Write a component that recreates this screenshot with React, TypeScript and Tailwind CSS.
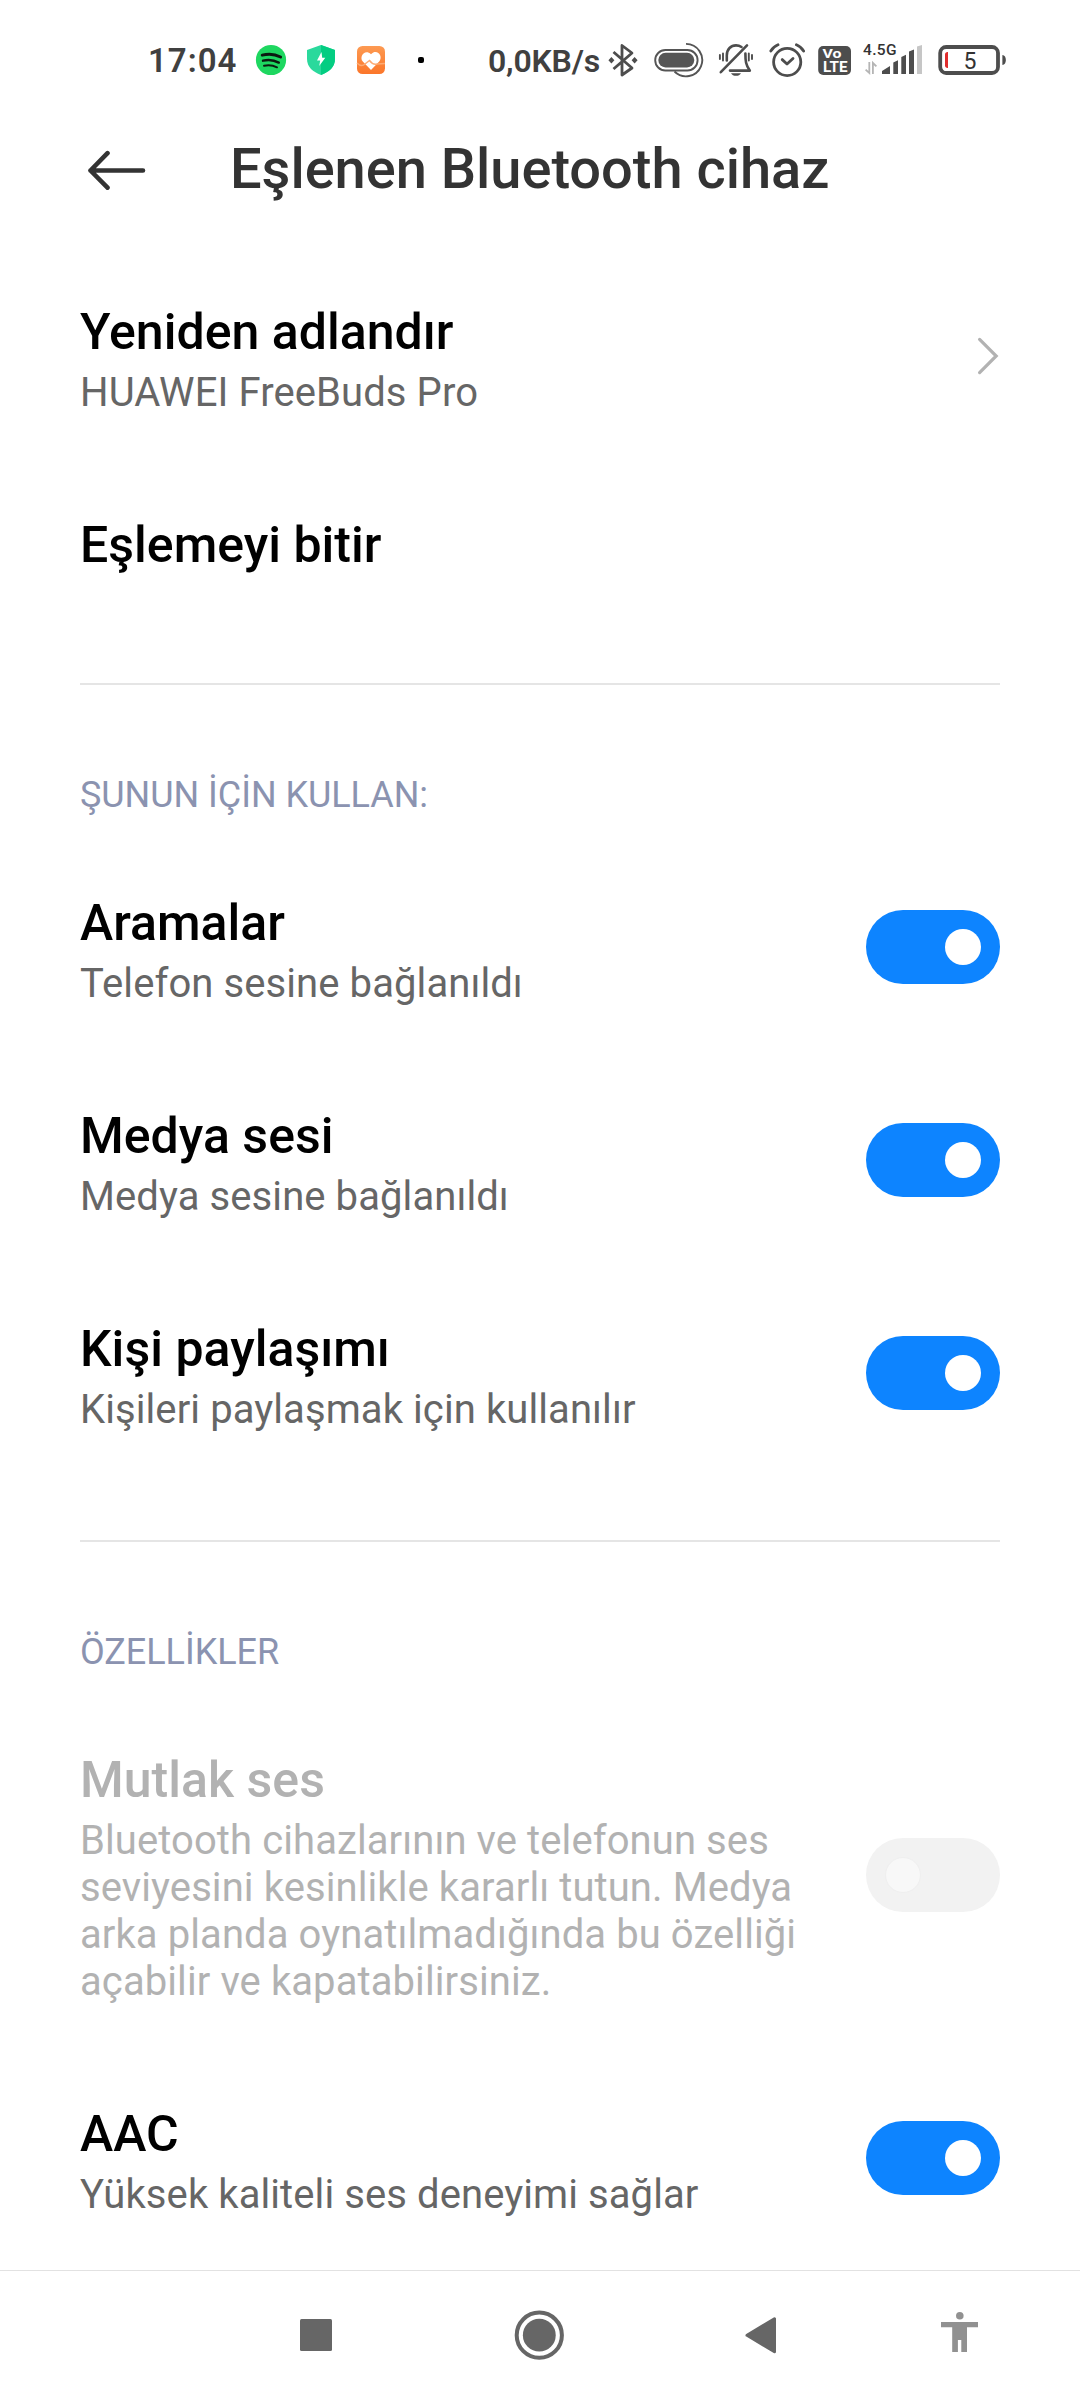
import { clsx } from "clsx";

const PROFILES = [
  { title: "Aramalar", text: "Telefon sesine bağlanıldı", on: true },
  { title: "Medya sesi", text: "Medya sesine bağlanıldı", on: true },
  { title: "Kişi paylaşımı", text: "Kişileri paylaşmak için kullanılır", on: true },
];

const FEATURES = [
  {
    title: "Mutlak ses",
    text: "Bluetooth cihazlarının ve telefonun ses seviyesini kesinlikle kararlı tutun. Medya arka planda oynatılmadığında bu özelliği açabilir ve kapatabilirsiniz.",
    on: false,
    disabled: true,
  },
  { title: "AAC", text: "Yüksek kaliteli ses deneyimi sağlar", on: true },
];

function StatusBar() {
  return (
    <div className="flex h-[120px] shrink-0 items-center pl-[148px] text-[#404040]">
      <span className="w-[107px] shrink-0 pt-0.5 whitespace-nowrap text-[33px] leading-10 font-semibold tracking-[1px]">17:04</span>

      {/* Spotify */}
      <svg className="shrink-0" width="32" height="40" viewBox="0 0 32 40" fill="none" stroke="#0b1a10" strokeLinecap="round">
        <circle cx="16" cy="20" r="15.1" fill="#1ed760" stroke="none" />
        <path d="M7.2 15.2C13 13.6 20 14.1 25.6 17" strokeWidth="2.9" />
        <path d="M8 20.7C13 19.4 19 20 23.8 22.6" strokeWidth="2.4" />
        <path d="M9 25.8C13.5 24.8 18 25.3 22 27.3" strokeWidth="2" />
      </svg>

      {/* Güvenlik */}
      <svg className="ml-[19px] shrink-0" width="30" height="40" viewBox="0 0 30 40">
        <path d="M15 5L29 10V19C29 27 23 32 15 35C7 32 1 27 1 19V10Z" fill="#2ad99c" />
        <path d="M15 5L29 10V19C29 27 23 32 15 35Z" fill="#04cd82" />
        <path d="M15.5 12L11 20.5H14.2L13.2 26L19.3 17.8H16.2Z" fill="#fff" />
      </svg>

      {/* Sağlık */}
      <svg className="ml-5 shrink-0" width="30" height="40" viewBox="0 0 30 40">
        <defs>
          <linearGradient id="health" x1="0" y1="0" x2="0" y2="1">
            <stop offset="0" stopColor="#fd9a52" />
            <stop offset="1" stopColor="#fb762a" />
          </linearGradient>
        </defs>
        <rect x="1" y="6" width="28" height="28" rx="5.5" fill="url(#health)" />
        <path d="M15 30L6.8 21.6C2.8 16.8 8.8 8.2 15 14.2C21.2 8.2 27.6 16.4 23.2 21.6Z" fill="#fff" />
        <path d="M1 23C4 26 7 25.8 9 24L13.5 20.5C16 24 18 25 21 24L29 23.5" fill="none" stroke="#fdab74" strokeWidth="1.5" />
      </svg>

      <svg className="ml-[31px] shrink-0" width="8" height="40" viewBox="0 0 8 40">
        <rect x="1" y="17" width="6" height="6" rx="2" fill="#000" />
      </svg>

      <span className="ml-[63px] w-[120px] shrink-0 pt-0.5 whitespace-nowrap text-[32px] leading-10 font-semibold tracking-[-0.2px]">0,0KB/s</span>

      {/* Bluetooth */}
      <svg className="shrink-0" width="30" height="40" viewBox="0 0 30 40" fill="none" stroke="#4d4d4d" strokeWidth="2.8">
        <path d="M5.5 12L24 28L14 35V5.5L24 13L5.5 29" strokeLinejoin="round" />
        <path d="M3.4 17L6.4 20.3L3.4 23.6L.4 20.3ZM26.6 17L29.6 20.3L26.6 23.6L23.6 20.3Z" fill="#4d4d4d" stroke="none" />
      </svg>

      {/* Kulaklık pili */}
      <svg className="ml-4 shrink-0" width="50" height="40" viewBox="0 0 50 40" fill="none" stroke="#555" strokeWidth="1.9">
        <path d="M32 3.9A16.2 16.2 0 1 1 20.5 31.5" />
        <rect x="1.2" y="10" width="42.4" height="20.5" rx="10.2" fill="#fff" />
        <rect x="4.3" y="12.8" width="36" height="14.6" rx="7.3" fill="#555" stroke="none" />
      </svg>

      {/* Sessiz */}
      <svg className="ml-3.5 shrink-0" width="36" height="40" viewBox="0 0 36 40" fill="none" stroke="#4d4d4d" strokeWidth="2.6" strokeLinecap="round">
        <path d="M8.8 20.5V15.5C8.8 9 13 5.4 18 5.4C20.3 5.4 22 6 23.5 7" />
        <path d="M27.4 13.5C27.4 21 27.8 25 31.8 30.6H12" strokeLinejoin="round" />
        <path d="M2.8 32.2L29 5.4" />
        <path d="M1.9 15V19M5 13.4V20.6M30.8 13.4V20.6M34 15V19" strokeWidth="1.9" />
        <path d="M13 33.2H23C21.5 36.6 14.5 36.6 13 33.2Z" fill="#4d4d4d" stroke="none" />
      </svg>

      {/* Alarm */}
      <svg className="ml-3.5 shrink-0" width="37" height="40" viewBox="0 0 37 40" fill="none" stroke="#4d4d4d" strokeWidth="2.8" strokeLinecap="round">
        <circle cx="19.2" cy="22" r="13.6" />
        <path d="M2.8 11C4.5 8.2 7 6 10 4.8M28.4 4.8C31.4 6 33.9 8.2 35.6 11" />
        <path d="M14.2 19.6L19 24L25 18.4" strokeLinejoin="round" />
      </svg>

      {/* VoLTE */}
      <svg className="ml-3 shrink-0 font-bold" width="35" height="40" viewBox="0 0 35 40" fill="#fff">
        <rect x="1.2" y="6" width="32.8" height="29" rx="5" fill="#4d4d4d" />
        <text x="5.6" y="17.8" fontSize="12.5" textLength="19" lengthAdjust="spacingAndGlyphs">Vo</text>
        <text x="6" y="31.8" fontSize="15" textLength="24.5" lengthAdjust="spacingAndGlyphs">LTE</text>
      </svg>

      {/* Sinyal */}
      <svg className="ml-[11px] shrink-0" width="60" height="40" viewBox="0 0 60 40" fill="#4d4d4d">
        <text x="0" y="14.8" fontSize="15.5" fontWeight="500" fill="#333" textLength="33.5">4.5G</text>
        <path d="M6.3 22V33L2.6 29.6M9.9 34V23L13.4 26.4" fill="none" stroke="#b5b5b5" strokeWidth="1.8" />
        <path d="M19 34V31L27 26V34ZM30.3 34V22.6L35 20.2V34ZM38.3 34V17L43 14.8V34ZM46 34V11.4L51 9.4V34Z" />
        <path d="M54 34V6.4L59 5V34Z" fill="#c6c6c6" />
      </svg>

      {/* Pil */}
      <svg className="ml-3.5 shrink-0" width="70" height="40" viewBox="0 0 70 40">
        <rect x="3.2" y="7" width="57.8" height="26" rx="6" fill="none" stroke="#4d4d4d" strokeWidth="3.8" />
        <path d="M65.4 15C70 15 70 25 65.4 25Z" fill="#4d4d4d" />
        <path d="M11 12H10.5C9 12 8 13 8 14.5V25.5C8 27 9 28 10.5 28H11Z" fill="#e02d2d" />
        <text x="26.6" y="29.2" fontSize="23" fill="#333">5</text>
      </svg>
    </div>
  );
}

function Toggle({ on, disabled }: { on: boolean; disabled?: boolean }) {
  return (
    <div
      className={clsx(
        "flex h-[74px] w-[134px] shrink-0 items-center rounded-full px-[19px]",
        on ? "justify-end bg-[#0d84ff]" : "justify-start bg-[#f2f2f2]"
      )}
    >
      <div className={clsx("size-9 rounded-full", disabled ? "border border-[#efefef] bg-[#f8f8f8]" : "bg-white")} />
    </div>
  );
}

type RowProps = {
  title: string;
  text?: string;
  disabled?: boolean;
  children?: React.ReactNode;
};

function Row({ title, text, disabled, children }: RowProps) {
  return (
    <div className="flex items-center justify-between pt-[47px] pb-[46px]">
      <div className="w-[730px] pt-[7px]">
        <h2 className={clsx("text-[50px] leading-[59px] font-medium tracking-[0.03px]", disabled ? "text-[#b2b2b2]" : "text-black")}>{title}</h2>
        {text && (
          <p className={clsx("mt-[7px] text-[40px] leading-[47px] tracking-[0.09px]", disabled ? "text-[#b2b2b2]" : "text-[#666]")}>{text}</p>
        )}
      </div>
      {children}
    </div>
  );
}

function SectionTitle({ children }: { children: React.ReactNode }) {
  return (
    <div className="mb-6 border-t-2 border-[#e5e5e5] pt-[89px]">
      <h3 className="text-[36px] leading-[42px] tracking-[-0.05px] text-[#8b93b0]">{children}</h3>
    </div>
  );
}

function NavBar() {
  return (
    <nav className="flex h-[130px] shrink-0 items-center border-t border-[#e2e2e2] bg-white pb-px pl-[300px] text-[#666]">
      <svg width="32" height="50" viewBox="0 0 32 50">
        <rect y="9" width="32" height="32" rx="1.5" fill="currentColor" />
      </svg>
      <svg className="ml-[182px]" width="50" height="50" viewBox="0 0 50 50">
        <circle cx="25.3" cy="25.2" r="22.6" fill="none" stroke="currentColor" strokeWidth="4" />
        <circle cx="25.3" cy="25.2" r="16.4" fill="currentColor" />
      </svg>
      <svg className="ml-[181px]" width="32" height="50" viewBox="0 0 32 50">
        <path d="M2 25.3L29.5 8.8V41.8Z" fill="currentColor" stroke="currentColor" strokeWidth="3" strokeLinejoin="round" />
      </svg>
      <svg className="ml-[164px]" width="37" height="50" viewBox="0 0 37 50" fill="#919191">
        <circle cx="18.8" cy="5.8" r="3.8" />
        <path d="M0 12H37V17.2H26V42H20.3V30H16.9V42H11.2V17.2H0Z" />
      </svg>
    </nav>
  );
}

export default function App() {
  return (
    <div className="flex h-[2400px] w-[1080px] flex-col overflow-hidden bg-white font-['Roboto',sans-serif]">
      <StatusBar />

      {/* Başlık */}
      <header className="flex h-[129px] shrink-0 items-start pl-[87px]">
        <svg className="mt-[30px] shrink-0" width="60" height="40" viewBox="0 0 60 40" fill="none" stroke="#333" strokeWidth="4.6" strokeLinecap="round" strokeLinejoin="round">
          <path d="M56 20.5H3.5M20.5 3.2L3.5 20.5L20.5 37.7" />
        </svg>
        <h1 className="mt-[16px] ml-[83px] text-[56px] leading-[66px] font-medium tracking-[-0.03px] text-[#333]">Eşlenen Bluetooth cihaz</h1>
      </header>

      <main className="min-h-0 flex-1 px-20">
        <section className="pb-[62px]">
          <Row title="Yeniden adlandır" text="HUAWEI FreeBuds Pro">
            <svg width="24" height="40" viewBox="0 0 24 40" fill="none" stroke="#b2b2b2" strokeWidth="3.2" strokeLinecap="round">
              <path d="M3.6 3.4L20.2 20L3.6 36.6" />
            </svg>
          </Row>
          <Row title="Eşlemeyi bitir" />
        </section>

        <section className="pb-[61px]">
          <SectionTitle>ŞUNUN İÇİN KULLAN:</SectionTitle>
          {PROFILES.map((item) => (
            <Row key={item.title} title={item.title} text={item.text}>
              <Toggle on={item.on} />
            </Row>
          ))}
        </section>

        <section>
          <SectionTitle>ÖZELLİKLER</SectionTitle>
          {FEATURES.map((item) => (
            <Row key={item.title} title={item.title} text={item.text} disabled={item.disabled}>
              <Toggle on={item.on} disabled={item.disabled} />
            </Row>
          ))}
        </section>
      </main>

      <NavBar />
    </div>
  );
}
